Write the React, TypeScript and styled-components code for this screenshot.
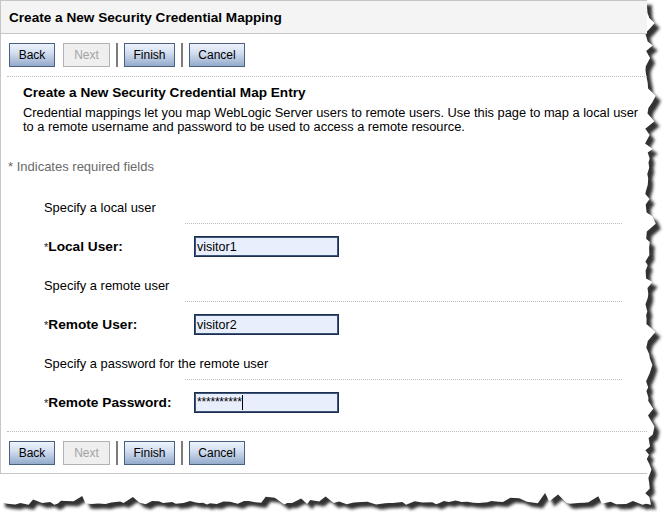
import React from "react";
import styled, { createGlobalStyle } from "styled-components";

const Global = createGlobalStyle`
  body {
    margin: 0;
    background: #ffffff;
    font-family: "Liberation Sans", Arial, sans-serif;
    color: #000;
  }
`;

function makeTorn(): string {
  let s = 48271;
  const r = () => {
    s = (s * 16807) % 2147483647;
    return s / 2147483647;
  };
  const pts: string[] = ["0,0", "647,0"];
  for (let y = 5; y < 500; y += 3 + r() * 6) {
    const x = 645 + r() * 5 + (r() < 0.2 ? 4 + r() * 4 : 0);
    pts.push(`${x.toFixed(1)},${y.toFixed(1)}`);
  }
  for (let x = 651; x > 2; x -= 3 + r() * 7) {
    const y = 501 + r() * 4 - (r() < 0.2 ? 3 + r() * 5 : 0);
    pts.push(`${x.toFixed(1)},${y.toFixed(1)}`);
  }
  pts.push("0,502");
  return "M" + pts.join(" L") + " Z";
}

const TORN = makeTorn();

const Page = styled.div`
  position: relative;
  width: 664px;
  height: 521px;
  overflow: hidden;
`;

const Paper = styled.svg`
  position: absolute;
  left: 0;
  top: 0;
  z-index: 0;
  pointer-events: none;
`;

const Panel = styled.div`
  position: relative;
  z-index: 1;
  width: 647px;
  box-sizing: border-box;
  border-left: 1px solid #c6c6c6;
  border-top: 1px solid #c6c6c6;
  border-bottom: 1px solid #c6c6c6;
`;

const Header = styled.div`
  height: 33px;
  background: #f4f4f4;
  border-bottom: 1px solid #c6c6c6;
  display: flex;
  align-items: center;
  padding: 1px 0 0 8px;
  box-sizing: border-box;
  font-weight: bold;
  font-size: 13.6px;
  color: #000;
`;

const Toolbar = styled.div<{ $top?: boolean }>`
  display: flex;
  align-items: center;
  gap: 6px;
  padding: 9px 0 ${(p) => (p.$top ? "9px" : "8px")} 8px;
  ${(p) =>
    p.$top
      ? "margin-left: 6px; padding-left: 2px; border-bottom: 1px dotted #bdbdbd;"
      : ""}
`;

const Button = styled.button<{ $w: number; $disabled?: boolean }>`
  width: ${(p) => p.$w}px;
  height: 24px;
  box-sizing: border-box;
  padding: 0;
  font-family: "Liberation Sans", Arial, sans-serif;
  font-size: 12px;
  border: 1px solid ${(p) => (p.$disabled ? "#b2b2b2" : "#4a6080")};
  color: ${(p) => (p.$disabled ? "#a3a3a3" : "#000")};
  background: ${(p) =>
    p.$disabled
      ? "#efefef"
      : "linear-gradient(to bottom, #eef3fb 0%, #d3def0 40%, #a9bcd8 80%, #93abcb 100%)"};
  cursor: default;
  & + & {
    margin-left: 2px;
  }
`;

const Sep = styled.span`
  width: 2px;
  height: 24px;
  background: #7c7c7c;
`;

const Body = styled.div`
  padding: 8px 0 0 22px;
`;

const Heading = styled.div`
  font-weight: bold;
  font-size: 13.6px;
  line-height: 16px;
`;

const Desc = styled.div`
  margin-top: 5px;
  font-size: 12.85px;
  line-height: 14px;
`;

const Required = styled.div`
  margin: 26px 0 0 7px;
  font-size: 13px;
  line-height: 14px;
  color: #6a6a6a;
`;

const Form = styled.div`
  margin-top: 27px;
`;

const Group = styled.div`
  & + & {
    margin-top: 22px;
  }
`;

const Hint = styled.div`
  padding-left: 43px;
  font-size: 12.9px;
  line-height: 14px;
`;

const Divider = styled.div`
  margin: 8px 0 0 184px;
  width: 437px;
  border-top: 1px dotted #bdbdbd;
`;

const FieldRow = styled.div`
  margin-top: 12px;
  display: flex;
  align-items: center;
  padding-left: 43px;
`;

const Label = styled.div`
  width: 150px;
  font-size: 13.7px;
  line-height: 15px;
  font-weight: bold;
`;

const Star = styled.span`
  font-weight: normal;
  font-size: 11px;
  color: #222;
`;

const Field = styled.div`
  width: 145px;
  height: 21px;
  box-sizing: border-box;
  border: 1px solid #1b2e4e;
  box-shadow: inset 0 0 0 1px #3e5478;
  background: #e8eefb;
  display: flex;
  align-items: center;
  padding-left: 2px;
  font-size: 12.5px;
  color: #000;
`;

const Masked = styled.span`
  font-size: 12px;
  letter-spacing: -0.2px;
  align-self: flex-start;
  margin-top: 3px;
  line-height: 12px;
`;

const Caret = styled.span`
  width: 1px;
  height: 15px;
  background: #000;
`;

const BottomRule = styled.div`
  margin: 18px 0 0 6px;
  border-top: 1px dotted #bdbdbd;
`;

function Buttons({ top }: { top?: boolean }) {
  return (
    <Toolbar $top={top}>
      <Button $w={46}>Back</Button>
      <Button $w={47} $disabled>
        Next
      </Button>
      <Sep />
      <Button $w={51}>Finish</Button>
      <Sep />
      <Button $w={56}>Cancel</Button>
    </Toolbar>
  );
}

export default function App() {
  return (
    <Page>
      <Global />
      <Paper width={664} height={521} viewBox="0 0 664 521">
        <defs>
          <filter id="sh" x="-5%" y="-5%" width="110%" height="110%">
            <feGaussianBlur stdDeviation="1.8" />
          </filter>
        </defs>
        <path d={TORN} fill="#333333" transform="translate(5 5)" filter="url(#sh)" />
        <path d={TORN} fill="#ffffff" />
      </Paper>
      <Panel>
        <Header>Create a New Security Credential Mapping</Header>
        <Buttons top />
        <Body>
          <Heading>Create a New Security Credential Map Entry</Heading>
          <Desc>
            Credential mappings let you map WebLogic Server users to remote users. Use this page to map a local user
            <br />
            to a remote username and password to be used to access a remote resource.
          </Desc>
        </Body>
        <Required>* Indicates required fields</Required>
        <Form>
          <Group>
            <Hint>Specify a local user</Hint>
            <Divider />
            <FieldRow>
              <Label>
                <Star>*</Star>Local User:
              </Label>
              <Field>visitor1</Field>
            </FieldRow>
          </Group>
          <Group>
            <Hint>Specify a remote user</Hint>
            <Divider />
            <FieldRow>
              <Label>
                <Star>*</Star>Remote User:
              </Label>
              <Field>visitor2</Field>
            </FieldRow>
          </Group>
          <Group>
            <Hint>Specify a password for the remote user</Hint>
            <Divider />
            <FieldRow>
              <Label>
                <Star>*</Star>Remote Password:
              </Label>
              <Field>
                <Masked>**********</Masked>
                <Caret />
              </Field>
            </FieldRow>
          </Group>
        </Form>
        <BottomRule />
        <Buttons />
      </Panel>
    </Page>
  );
}
